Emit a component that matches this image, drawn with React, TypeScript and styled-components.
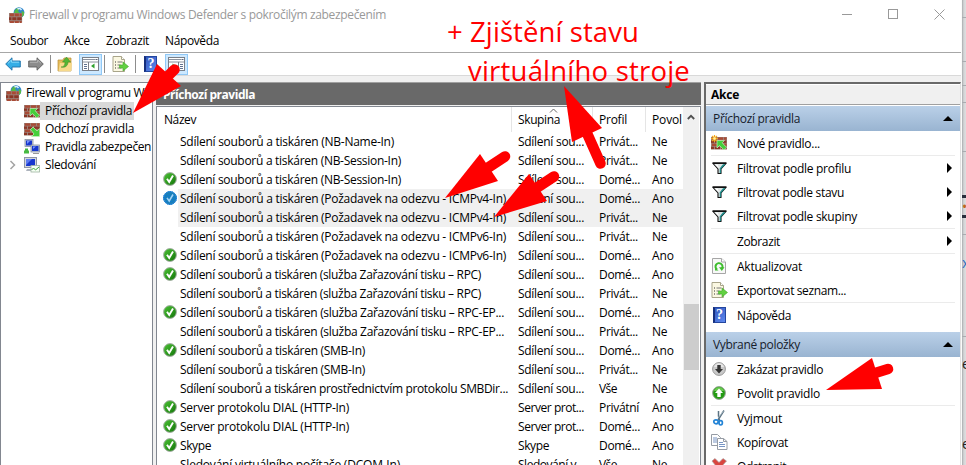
import React, { useLayoutEffect, useRef, useState } from "react";
import styled, { createGlobalStyle } from "styled-components";

const GlobalStyle = createGlobalStyle`
  * { box-sizing: border-box; }
  body { margin: 0; background: #d9dadb; overflow: hidden; }
`;

/* ---------- text fitted to an exact advance width ---------- */
const FitSpan = styled.span`
  display: inline-block;
  white-space: pre;
  flex: none;
`;

function Fit({ w, children }: { w: number; children: string }) {
  const ref = useRef<HTMLSpanElement>(null);
  const [spacing, setSpacing] = useState(0);
  useLayoutEffect(() => {
    if (ref.current) {
      const natural = ref.current.getBoundingClientRect().width;
      setSpacing((w - natural) / children.length);
    }
  }, [w, children]);
  return <FitSpan ref={ref} style={{ letterSpacing: spacing }}>{children}</FitSpan>;
}

/* ---------- icons ---------- */
const Svg = styled.svg`
  display: block;
  flex: none;
`;

const Bricks = ({ y = 0, h = 16 }: { y?: number; h?: number }) => (
  <g>
    <rect x="0" y={y} width="16" height={h} fill="#9c8078" />
    {[0, 1, 2, 3].filter((r) => r * 4 < h).map((r) => (
      <g key={r} fill={r % 2 ? "#8c3626" : "#a94a35"}>
        <rect x={r % 2 ? 0 : 1} y={y + r * 4 + 0.5} width={r % 2 ? 3 : 5} height="3" />
        <rect x={r % 2 ? 4 : 7} y={y + r * 4 + 0.5} width="5" height="3" />
        <rect x={r % 2 ? 10 : 13} y={y + r * 4 + 0.5} width={r % 2 ? 5.4 : 2.5} height="3" />
      </g>
    ))}
  </g>
);

const FirewallIcon = () => (
  <Svg width="16" height="16" viewBox="0 0 16 16">
    <circle cx="10" cy="5.600" r="5.400" fill="#2f86cc" />
    <path d="M6 3Q9 0 11 1L9 4L11 6L7 8L5 6ZM12.500 4l2.500 1v3l-2 2z" fill="#57b947" />
    <path d="M8.500 2q2.500-1.500 4 1" stroke="#d8efff" strokeWidth="1.500" fill="none" />
    <g transform="translate(0 6) scale(.82 .95)"><Bricks h={10} /></g>
  </Svg>
);

const RuleIcon = ({ kind }: { kind: "in" | "out" | "new" }) => (
  <Svg width="16" height="16" viewBox="0 0 16 16">
    <g transform="translate(0 2) scale(1 .78)"><Bricks /></g>
    {kind === "out" ? (
      <path d="M6.500 8.500l2.500-2.500 4 4L15.500 7.500v8h-8L10 13z" fill="#45cf3c" stroke="#c6f0bd" strokeWidth=".7" />
    ) : (
      <path d="M6 5.500h7.500l-2.300 2.300 4.300 4.500-2.700 2.700-4.300-4.500L6 13z" fill="#45cf3c" stroke="#c6f0bd" strokeWidth=".7" />
    )}
    {kind === "new" && (
      <g stroke="#f4a91e" strokeWidth="1.200">
        <path d="M3.500 0v7M0 3.500h7M1 1l5 5M6 1L1 6" />
        <circle cx="3.500" cy="3.500" r="1.200" fill="#fff3a6" stroke="none" />
      </g>
    )}
  </Svg>
);

const ComputersIcon = () => (
  <Svg width="16" height="16" viewBox="0 0 16 16">
    <rect x="1" y=".5" width="8" height="7" fill="#c5cbd5" stroke="#8790a0" strokeWidth=".8" />
    <rect x="2" y="1.500" width="6" height="5" fill="#1938cf" />
    <path d="M3 2h3L3 5z" fill="#7795ff" />
    <rect x="7" y="6" width="8.500" height="7" fill="#c5cbd5" stroke="#8790a0" strokeWidth=".8" />
    <rect x="8" y="7" width="6.500" height="5" fill="#1938cf" />
    <path d="M9 7.500h3L9 10z" fill="#7795ff" />
    <path d="M9 14h6v1H9z" fill="#999" />
    <path d="M1 9.500h3v2H1zM0 11.500h5v3H0z" fill="#47b942" />
  </Svg>
);

const MonitorIcon = () => (
  <Svg width="16" height="16" viewBox="0 0 16 16">
    <rect x=".5" y=".5" width="12" height="10" fill="#d3d6dd" stroke="#8f96a5" />
    <rect x="2" y="2" width="9" height="7" fill="#1938cf" />
    <path d="M2 2h6L2 8z" fill="#5f7cf0" />
    <path d="M3 12h6v2H2z" fill="#aeb4bd" />
    <rect x="7" y="8.500" width="8.500" height="6.500" fill="#f6fff4" stroke="#9eb3a1" strokeWidth=".8" />
    <path d="M7.500 13l2-2 2 2 3.500-3" stroke="#40ab3c" fill="none" />
  </Svg>
);

const NavArrow = ({ back }: { back?: boolean }) => (
  <Svg width="16" height="14" viewBox="0 0 16 14">
    <path
      d={back ? "M.7 7L7 .8V4h8.300v6H7v3.200z" : "M15.300 7L9 .8V4H.7v6H9v3.200z"}
      fill={back ? "#35aee6" : "#8c8c8c"}
      stroke={back ? "#1d6fa8" : "#5e5e5e"}
      strokeWidth=".9"
    />
    <path d={back ? "M3 6.300L6.500 3v2.200H14" : "M2 5.200h7.700V3L13 6.300"} fill="none" stroke={back ? "#8ddcfa" : "#bcbcbc"} strokeWidth=".9" />
  </Svg>
);

const FolderUpIcon = () => (
  <Svg width="16" height="16" viewBox="0 0 16 16">
    <path d="M1 4h5l1-2h7v13H1z" fill="#e6bd5b" stroke="#b78d35" strokeWidth=".7" />
    <path d="M1.500 15L3 7h12l-1 8z" fill="#f7da8c" />
    <path d="M4 11c3 0 4-2 4-5H5.500L9.500 1l4 5H11c0 4-3 6-7 5z" fill="#54b534" stroke="#3d8c26" strokeWidth=".5" />
  </Svg>
);

const PanelIcon = ({ right }: { right?: boolean }) => (
  <Svg width="17" height="14" viewBox="0 0 17 14">
    <rect x=".5" y=".5" width="16" height="13" fill="#fff" stroke="#7a7f88" />
    <path d="M1 2.500h12M1 5h15" stroke="#8b929e" />
    <path d="M13.500 2.500h2" stroke="#5b6478" />
    <path d={right ? "M10.500 5v8" : "M6.500 5v8"} stroke="#7a7f88" />
    <path d={right ? "M12 7.500h3M12 9.500h3M12 11.500h3" : "M2 7.500h3M2 9.500h3M2 11.500h3"} stroke="#5f7190" />
    <path d={right ? "M4.500 6.500v5l3-2.500z" : "M12.500 6.500v5l-3.500-2.500z"} fill="#2fa12d" />
  </Svg>
);

const ExportIcon = () => (
  <Svg width="17" height="16" viewBox="0 0 17 16">
    <path d="M1 .5h8.500l3 3v12H1z" fill="#fbf8e2" stroke="#a9a58a" />
    <path d="M9.500.5v3h3" fill="#fff" stroke="#a9a58a" />
    <path d="M3 6h1M3 9h1M3 12h1" stroke="#333" />
    <path d="M5.500 6h5M5.500 9h3M5.500 12h4" stroke="#777" />
    <path d="M7.500 9H11V6l5.500 4.500L11 15v-3H7.500z" fill="#62d041" stroke="#41a92c" strokeWidth=".6" />
  </Svg>
);

const HelpGlyph = styled.span`
  display: block;
  width: 13px;
  height: 16px;
  flex: none;
  border: 1px solid #24469e;
  border-left: 2px solid #162f7c;
  background: linear-gradient(135deg, #3157bd, #5f8af0);
  color: #fff;
  font: bold 14px/14px "Liberation Serif", serif;
  text-align: center;
`;
const HelpIcon = () => <HelpGlyph>?</HelpGlyph>;

const FilterIcon = () => (
  <Svg width="15" height="13" viewBox="0 0 15 13">
    <path d="M1 1.500h13L9 7v4.500H6V7z" fill="#dfe5e5" stroke="#111" strokeWidth="1.100" strokeLinejoin="round" />
    <path d="M8 6.500l3-4h2L8.600 7v4H8z" fill="#178a88" stroke="#178a88" strokeWidth=".5" />
    <path d="M3 2.500h2.500L7 6z" fill="#fff" />
    <path d="M.5 1h14" stroke="#111" strokeWidth="1.500" />
  </Svg>
);

const RefreshIcon = () => (
  <Svg width="14" height="16" viewBox="0 0 14 16">
    <path d="M.5.5h9l4 3.500v11.500H.5z" fill="#f7f8f7" stroke="#a6a6a6" />
    <path d="M9.500.5V4h4" fill="#fff" stroke="#a6a6a6" />
    <path d="M5 11.500A3.500 3.500 0 1 1 10 10.500" fill="none" stroke="#3fbd2e" strokeWidth="2" />
    <path d="M7 9.200h5.500L9.800 13z" fill="#3fbd2e" />
    <path d="M3 9.500v3h3.500z" fill="#3fbd2e" />
  </Svg>
);

const CircleArrow = ({ up }: { up?: boolean }) => (
  <Svg width="14" height="14" viewBox="0 0 14 14">
    <circle cx="7" cy="7" r="6.400" fill={up ? "#249b13" : "#c9c9c9"} stroke={up ? "#9aa39a" : "#999"} strokeWidth="1" />
    <path d="M2 5a5.200 5.200 0 0 1 10 0z" fill={up ? "#67c94e" : "#e6e6e6"} />
    <path d={up ? "M7 2.500L11 7H8.700v4H5.300V7H3z" : "M7 11.500L3 7h2.300V3h3.400v4H11z"} fill={up ? "#fff" : "#333"} />
  </Svg>
);

const ScissorsIcon = () => (
  <Svg width="14" height="16" viewBox="0 0 14 16">
    <path d="M6.500 1v5l1 5M12 .5L6 10" stroke="#5c7383" strokeWidth="1.500" fill="none" />
    <path d="M11.500 1L6 8" stroke="#b9cad4" strokeWidth=".7" />
    <ellipse cx="4" cy="11.800" rx="2.200" ry="2" fill="none" stroke="#2484d6" strokeWidth="1.700" />
    <ellipse cx="8.700" cy="12.800" rx="1.700" ry="2.200" fill="none" stroke="#2484d6" strokeWidth="1.700" />
  </Svg>
);

const CopyIcon = () => (
  <Svg width="17" height="16" viewBox="0 0 17 16">
    <path d="M.5.5h6l3 3v8h-9z" fill="#fff" stroke="#969ca5" />
    <path d="M2 4h4M2 6h4M2 8h4" stroke="#7895c4" />
    <path d="M6.500 4.500h6l3.500 3v8H6.500z" fill="#fff" stroke="#969ca5" />
    <path d="M12.500 4.500v3H16" fill="none" stroke="#969ca5" />
    <path d="M8 8.500h4M8 10.500h6M8 12.500h6" stroke="#7895c4" />
  </Svg>
);

const DeleteIcon = () => (
  <Svg width="16" height="16" viewBox="0 0 16 16">
    <path d="M1 3l3-2.500 4 4 4-4L15.500 3 11 8l4.500 5-3 2.500L8 11l-4.500 4.500L.8 13 5 8z" fill="#d9453f" stroke="#a9a0a0" strokeWidth=".7" />
  </Svg>
);

const CheckIcon = ({ selected }: { selected?: boolean }) => (
  <Svg width="14" height="14" viewBox="0 0 14 14">
    <defs>
      <linearGradient id="ok" x1="0" y1="0" x2="1" y2="1">
        <stop offset="0" stopColor="#4cc335" />
        <stop offset="1" stopColor="#127309" />
      </linearGradient>
    </defs>
    <circle cx="7" cy="7" r="6.400" fill={selected ? "#1a80b8" : "url(#ok)"} stroke={selected ? "#2f86d0" : "#a5aea5"} />
    {selected && (
      <circle cx="7" cy="7" r="6.500" fill="none" stroke="#0a78d7" strokeDasharray="1 1" />
    )}
    {selected && (
      <path d="M2 4.500h10M1.500 6.500h11M1.500 8.500h11M3 10.500h8" stroke="#0a78d7" strokeDasharray="1 1" />
    )}
    <path d="M4 6.800L6.200 10 10 3.500" fill="none" stroke={selected ? "#a5d4f5" : "#fff"} strokeWidth={selected ? 1.5 : 1.9} />
  </Svg>
);

/* ---------- window frame ---------- */
const Screen = styled.div`
  position: relative;
  display: flex;
  width: 966px;
  height: 465px;
  overflow: hidden;
  font: 12px/19px "Open Sans", "Noto Sans", sans-serif;
  color: #000;
`;
const Window = styled.div`
  display: flex;
  flex-direction: column;
  width: 962px;
  height: 465px;
  background: #fff;
  border-right: 1px solid #fafafa;
`;
const TitleBar = styled.header`
  display: flex;
  align-items: center;
  height: 29px;
  padding-left: 9px;
  gap: 4px;
  color: #999;
`;
const WindowButtons = styled.div`
  display: flex;
  margin-left: auto;
  padding-right: 16px;
  gap: 35px;
`;
const MenuBar = styled.nav`
  display: flex;
  height: 24px;
  padding: 2px 0 0 10px;
  gap: 16px;
  border-bottom: 1px solid #a7a7a7;
`;
const ToolBar = styled.div`
  display: flex;
  align-items: center;
  height: 23px;
  padding-left: 5px;
  border-bottom: 1px solid #d9d9d9;
`;
const Tool = styled.span<{ $w: number; $active?: boolean }>`
  display: flex;
  align-items: center;
  justify-content: center;
  width: ${(p) => p.$w}px;
  height: 21px;
  border: 1px solid ${(p) => (p.$active ? "#90c8f6" : "transparent")};
  background: ${(p) => (p.$active ? "#cce8ff" : "none")};
`;
const ToolDivider = styled.i`
  width: 1px;
  height: 18px;
  background: #8d8d8d;
`;
const Body = styled.main`
  display: flex;
  flex: 1;
  min-height: 0;
  padding-top: 6px;
  background: #f0f0f0;
`;

/* ---------- tree ---------- */
const Tree = styled.aside`
  width: 153px;
  padding: 1px 1px 0 0;
  border: 1px solid #828790;
  border-bottom: 0;
  background: #fff;
  overflow: hidden;
`;
const TreeRow = styled.div<{ $root?: boolean }>`
  display: flex;
  align-items: center;
  height: 18px;
  padding-left: ${(p) => (p.$root ? 5 : 8)}px;
`;
const Expander = styled.span`
  display: flex;
  flex: none;
  width: 15px;
`;
const TreeLabel = styled.span<{ $selected?: boolean; $root?: boolean }>`
  display: flex;
  flex: none;
  height: 18px;
  line-height: 18px;
  margin-left: ${(p) => (p.$root ? 4 : 0)}px;
  padding: 0 2px 0 ${(p) => (p.$root ? 0 : 5)}px;
  background: ${(p) => (p.$selected ? "#d9d9d9" : "none")};
`;

/* ---------- rule list ---------- */
const ListPane = styled.section`
  display: flex;
  flex-direction: column;
  width: 545px;
  margin-left: 3px;
`;
const PaneTitle = styled.h2`
  height: 24px;
  margin: 0;
  padding-left: 7px;
  border-top: 1px solid #a0a0a0;
  border-bottom: 1px solid #f0f0f0;
  background: #696969;
  color: #fff;
  font-size: 12px;
  font-weight: 700;
  line-height: 23px;
`;
const ListBox = styled.div`
  display: flex;
  flex: 1;
  min-height: 0;
  border: 1px solid #828790;
  border-bottom: 0;
  background: #fff;
`;
const Table = styled.div`
  width: 526px;
  overflow: hidden;
`;
const HeaderRow = styled.div`
  display: grid;
  grid-template-columns: 355px 81px 53px 37px;
  height: 25px;
  line-height: 26px;
`;
const HeaderCell = styled.div<{ $first?: boolean }>`
  position: relative;
  padding-left: ${(p) => (p.$first ? 7 : 6)}px;
  border-right: 1px solid #e5e5e5;
  overflow: hidden;
  white-space: nowrap;
  &:last-child { border: 0; }
`;
const SortMark = styled.svg`
  position: absolute;
  left: 37px;
  top: 1px;
`;
const Row = styled.div`
  display: grid;
  grid-template-columns: 21px 334px 81px 53px 37px;
  height: 19px;
  line-height: 20px;
`;
const Cell = styled.div<{ $pad?: number; $selected?: boolean }>`
  height: 19px;
  padding-left: ${(p) => p.$pad ?? 6}px;
  white-space: nowrap;
  overflow: hidden;
  background: ${(p) => (p.$selected ? "#f0f0f0" : "none")};
`;
const StateCell = styled.div`
  height: 19px;
  padding: 2px 0 0 6px;
`;
const ScrollBar = styled.div`
  width: 16px;
  background: #f0f0f0;
  display: flex;
  flex-direction: column;
  align-items: center;
  padding-top: 7px;
`;
const Thumb = styled.div`
  width: 15px;
  height: 66px;
  margin-top: 184px;
  background: #cdcdcd;
`;

/* ---------- actions pane ---------- */
const ActionsPane = styled.aside`
  display: flex;
  flex-direction: column;
  width: 257px;
  margin-left: 3px;
  border-left: 2px solid #696969;
  border-top: 2px solid #696969;
  border-right: 1px solid #e0e0e0;
  background: #fff;
`;
const ActionsTitle = styled.h2`
  flex: none;
  height: 21px;
  margin: 0 0 1px;
  padding-left: 5px;
  border-top: 1px solid #fff;
  border-bottom: 1px solid #a0a0a0;
  background: #f0f0f0;
  font-size: 12px;
  font-weight: 700;
  line-height: 20px;
`;
const GroupHeader = styled.div<{ $second?: boolean }>`
  display: flex;
  flex: none;
  align-items: center;
  justify-content: space-between;
  height: 25px;
  margin-top: ${(p) => (p.$second ? 5 : 0)}px;
  padding: 0 7px 0 7px;
  background: linear-gradient(#bad0e8, #99b4d1);
  color: #16202c;
`;
const Action = styled.div`
  display: flex;
  flex: none;
  align-items: center;
  height: 24px;
  padding: 0 8px 0 5px;
`;
const ActionIcon = styled.span`
  display: flex;
  justify-content: center;
  width: 16px;
  margin-right: 10px;
`;
const More = styled.i`
  margin-left: auto;
  border: 5px solid transparent;
  border-left-color: #000;
  border-right: 0;
`;
const Collapse = styled.i`
  border: 5px solid transparent;
  border-bottom-color: #000;
  border-top: 0;
`;
const Separator = styled.hr`
  flex: none;
  width: 244px;
  height: 1px;
  margin: 0 0 0 5px;
  border: 0;
  background: #ebebeb;
`;

/* ---------- sliver of the page behind the window ---------- */
const Behind = styled.div`
  display: flex;
  flex-direction: column;
  width: 4px;
  background: linear-gradient(90deg, #a9abad, #d3d4d6 45%, #dedfe0);
`;
const BehindSlot = styled.div<{ $h: number; $color?: string; $line?: boolean }>`
  flex: none;
  height: ${(p) => p.$h}px;
  overflow: hidden;
  border-bottom: ${(p) => (p.$line ? "1px solid #a9acb0" : "0")};
  color: ${(p) => p.$color ?? "#222"};
  font-size: 14px;
  line-height: ${(p) => p.$h}px;
`;
const DarkBar = styled.div`
  flex: none;
  height: 3px;
  background: #282f3d;
`;

/* ---------- annotations ---------- */
const Marks = styled.svg`
  position: absolute;
  inset: 0;
`;
const Note = styled.div<{ $x: number; $y: number }>`
  position: absolute;
  left: ${(p) => p.$x}px;
  top: ${(p) => p.$y}px;
  color: #f00;
  font: 27.500px/38px "Open Sans", sans-serif;
  white-space: pre;
`;

const arrows = [
  { head: "133,113 157,64 181,86", shaft: "M165 79L174.500 69.500" },
  { head: "445,198 480,154 498,181", shaft: "M486 169L505 156.500" },
  { head: "494,217 529,174 547,201", shaft: "M535 189L554 176.500" },
  { head: "564,86 602,128 572,142", shaft: "M586 131L600.500 163.500" },
  { head: "826,390 872,358 882,389", shaft: "M872 374L888 369" },
];

const S = "Sdílení souborů a tiskáren ";
const spool = S + "(služba Zařazování tisku – RPC";
type Profile = "P" | "D" | "V" | "PN";
type RuleRow = [string, number, "S" | "R" | "K" | "L", Profile, boolean, boolean?];
const rules: RuleRow[] = [
  [S + "(NB-Name-In)", 214, "S", "P", false],
  [S + "(NB-Session-In)", 221, "S", "P", false],
  [S + "(NB-Session-In)", 221, "S", "D", true],
  [S + "(Požadavek na odezvu - ICMPv4-In)", 326, "S", "D", true, true],
  [S + "(Požadavek na odezvu - ICMPv4-In)", 326, "S", "P", false, true],
  [S + "(Požadavek na odezvu - ICMPv6-In)", 326, "S", "P", false],
  [S + "(Požadavek na odezvu - ICMPv6-In)", 326, "S", "D", true],
  [spool + ")", 301, "S", "D", true],
  [spool + ")", 301, "S", "P", false],
  [spool + "-EP...", 324, "S", "D", true],
  [spool + "-EP...", 324, "S", "P", false],
  [S + "(SMB-In)", 185, "S", "D", true],
  [S + "(SMB-In)", 185, "S", "P", false],
  [S + "prostřednictvím protokolu SMBDir...", 328, "S", "V", false],
  ["Server protokolu DIAL (HTTP-In)", 169, "R", "PN", true],
  ["Server protokolu DIAL (HTTP-In)", 169, "R", "D", true],
  ["Skype", 31, "K", "D", true],
  ["Sledování virtuálního počítače (DCOM-In)", 220, "L", "V", false],
];
const groups = {
  S: ["Sdílení sou...", 66], R: ["Server prot...", 66], K: ["Skype", 31], L: ["Sledování v...", 66],
} as const;
const profiles = { P: ["Privát...", 39], D: ["Domé...", 41], V: ["Vše", 18], PN: ["Privátní", 40] } as const;

function ActionItem({ icon, label, w, more }: { icon?: React.ReactNode; label: string; w: number; more?: boolean }) {
  return (
    <Action>
      <ActionIcon>{icon}</ActionIcon>
      <Fit w={w}>{label}</Fit>
      {more && <More />}
    </Action>
  );
}

function RuleList() {
  return (
    <ListPane>
      <PaneTitle><Fit w={92}>Příchozí pravidla</Fit></PaneTitle>
      <ListBox>
        <Table>
          <HeaderRow>
            <HeaderCell $first><Fit w={32}>Název</Fit></HeaderCell>
            <HeaderCell>
              <SortMark width="9" height="5" viewBox="0 0 9 5"><path d="M1 4.500L4.500 1 8 4.500" fill="none" stroke="#666" /></SortMark>
              <Fit w={42}>Skupina</Fit>
            </HeaderCell>
            <HeaderCell><Fit w={28}>Profil</Fit></HeaderCell>
            <HeaderCell><Fit w={30}>Povol</Fit></HeaderCell>
          </HeaderRow>
          {rules.map(([name, w, group, profile, on, selected], i) => (
            <Row key={i}>
              <StateCell>{on && <CheckIcon selected={selected} />}</StateCell>
              <Cell $pad={2} $selected={selected}><Fit w={w}>{name}</Fit></Cell>
              <Cell $selected={selected}><Fit w={groups[group][1]}>{groups[group][0]}</Fit></Cell>
              <Cell $selected={selected}><Fit w={profiles[profile][1]}>{profiles[profile][0]}</Fit></Cell>
              <Cell $selected={selected}><Fit w={on ? 22 : 15}>{on ? "Ano" : "Ne"}</Fit></Cell>
            </Row>
          ))}
        </Table>
        <ScrollBar>
          <Svg width="8" height="6" viewBox="0 0 8 6"><path d="M.8 5L4 1.800 7.200 5" fill="none" stroke="#505050" strokeWidth="1.800" /></Svg>
          <Thumb />
        </ScrollBar>
      </ListBox>
    </ListPane>
  );
}

function Actions() {
  return (
    <ActionsPane>
      <ActionsTitle><Fit w={28}>Akce</Fit></ActionsTitle>
      <GroupHeader><Fit w={87}>Příchozí pravidla</Fit><Collapse /></GroupHeader>
      <ActionItem icon={<RuleIcon kind="new" />} label="Nové pravidlo..." w={83} />
      <Separator />
      <ActionItem icon={<FilterIcon />} label="Filtrovat podle profilu" w={114} more />
      <ActionItem icon={<FilterIcon />} label="Filtrovat podle stavu" w={107} more />
      <ActionItem icon={<FilterIcon />} label="Filtrovat podle skupiny" w={120} more />
      <Separator />
      <ActionItem label="Zobrazit" w={43} more />
      <Separator />
      <ActionItem icon={<RefreshIcon />} label="Aktualizovat" w={65} />
      <ActionItem icon={<ExportIcon />} label="Exportovat seznam..." w={109} />
      <Separator />
      <ActionItem icon={<HelpIcon />} label="Nápověda" w={54} />
      <GroupHeader $second><Fit w={87}>Vybrané položky</Fit><Collapse /></GroupHeader>
      <ActionItem icon={<CircleArrow />} label="Zakázat pravidlo" w={86} />
      <ActionItem icon={<CircleArrow up />} label="Povolit pravidlo" w={83} />
      <Separator />
      <ActionItem icon={<ScissorsIcon />} label="Vyjmout" w={45} />
      <ActionItem icon={<CopyIcon />} label="Kopírovat" w={51} />
      <ActionItem icon={<DeleteIcon />} label="Odstranit" w={49} />
    </ActionsPane>
  );
}

const title = "Firewall v programu Windows Defender s pokročilým zabezpečením";

export default function App() {
  return (
    <Screen>
      <GlobalStyle />
      <Window>
        <TitleBar>
          <FirewallIcon />
          <Fit w={357}>{title}</Fit>
          <WindowButtons>
            <Svg width="11" height="11"><path d="M0 5.500h10" stroke="#999" /></Svg>
            <Svg width="11" height="11"><rect x=".5" y=".5" width="9" height="9" fill="none" stroke="#999" /></Svg>
            <Svg width="11" height="11"><path d="M.5.5l10 10M10.500.5l-10 10" stroke="#999" /></Svg>
          </WindowButtons>
        </TitleBar>
        <MenuBar>
          <Fit w={38}>Soubor</Fit>
          <Fit w={26}>Akce</Fit>
          <Fit w={43}>Zobrazit</Fit>
          <Fit w={54}>Nápověda</Fit>
        </MenuBar>
        <ToolBar>
          <Tool $w={16}><NavArrow back /></Tool>
          <Tool $w={29}><NavArrow /></Tool>
          <ToolDivider />
          <Tool $w={28}><FolderUpIcon /></Tool>
          <Tool $w={23} $active><PanelIcon /></Tool>
          <Tool $w={2} />
          <ToolDivider />
          <Tool $w={30}><ExportIcon /></Tool>
          <ToolDivider />
          <Tool $w={29}><HelpIcon /></Tool>
          <Tool $w={23} $active><PanelIcon right /></Tool>
        </ToolBar>
        <Body>
          <Tree>
            <TreeRow $root><FirewallIcon /><TreeLabel $root><Fit w={357}>{title}</Fit></TreeLabel></TreeRow>
            <TreeRow><Expander /><RuleIcon kind="in" /><TreeLabel $selected><Fit w={87}>Příchozí pravidla</Fit></TreeLabel></TreeRow>
            <TreeRow><Expander /><RuleIcon kind="out" /><TreeLabel><Fit w={89}>Odchozí pravidla</Fit></TreeLabel></TreeRow>
            <TreeRow><Expander /><ComputersIcon /><TreeLabel><Fit w={106}>Pravidla zabezpečen</Fit></TreeLabel></TreeRow>
            <TreeRow>
              <Expander><Svg width="7" height="10" viewBox="0 0 7 10"><path d="M1.500 1L5.500 5l-4 4" fill="none" stroke="#a3a3a3" strokeWidth="1.500" /></Svg></Expander>
              <MonitorIcon /><TreeLabel><Fit w={51}>Sledování</Fit></TreeLabel>
            </TreeRow>
          </Tree>
          <RuleList />
          <Actions />
        </Body>
      </Window>
      <Behind>
        <BehindSlot $h={18} $line />
        <BehindSlot $h={44} $line />
        <BehindSlot $h={24} $line />
        <BehindSlot $h={17} $line />
        <BehindSlot $h={49} $line />
        <BehindSlot $h={43} />
        <DarkBar />
        <BehindSlot $h={17} $color="#c0661c">•</BehindSlot>
        <DarkBar />
        <BehindSlot $h={17} $line />
        <BehindSlot $h={56} $color="#2d6fc0">x</BehindSlot>
        <BehindSlot $h={46} $line />
        <BehindSlot $h={54}>e</BehindSlot>
        <BehindSlot $h={26} />
        <BehindSlot $h={54}>e</BehindSlot>
      </Behind>
      <Marks width="966" height="465">
        {arrows.map((a) => (
          <g key={a.head} fill="#f00" stroke="#f00">
            <polygon points={a.head} stroke="none" />
            <path d={a.shaft} strokeWidth="10.500" strokeLinecap="round" />
          </g>
        ))}
      </Marks>
      <Note $x={447} $y={13}><Fit w={192}>+ Zjištění stavu</Fit></Note>
      <Note $x={468} $y={52}><Fit w={222}>virtuálního stroje</Fit></Note>
    </Screen>
  );
}
